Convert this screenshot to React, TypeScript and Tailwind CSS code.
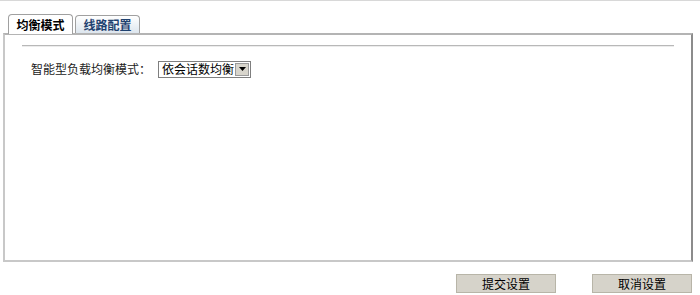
import React from "react";

const font = { fontFamily: '"Noto Sans CJK SC", "Liberation Sans", sans-serif' };

const Tab: React.FC<{ label: string; active?: boolean }> = ({ label, active }) => (
  <div
    className={
      active
        ? "relative -mb-px h-[20px] w-[65px] rounded-t-[4px] border border-b-0 border-[#a0a0a0] bg-white flex items-center justify-center text-[12px] font-bold text-black z-10"
        : "h-[18px] w-[65px] rounded-t-[4px] border border-b-0 border-[#a0a0a0] bg-gradient-to-b from-[#ffffff] to-[#dde6ee] flex items-center justify-center text-[12px] font-bold text-[#1f4270]"
    }
  >
    {label}
  </div>
);

const Btn: React.FC<{ label: string }> = ({ label }) => (
  <button className="h-[19px] w-[100px] border border-[#b8b5a8] bg-[#d6d3ca] text-[12px] leading-none text-black">
    {label}
  </button>
);

export default function App() {
  return (
    <div className="w-[700px] h-[295px] bg-white border-t border-[#d8d8d8]" style={font}>
      <div className="pl-[8px] pt-[13px] flex items-end gap-[2px] pr-[8px]">
        <Tab label="均衡模式" active />
        <Tab label="线路配置" />
      </div>
      <div className="ml-[3px] w-[690px] h-[229px] border-t-2 border-l-2 border-r-2 border-b-2 border-t-[#b4b4b4] border-l-[#c8c8c8] border-r-[#8c8c8c] border-b-[#c8c8c8] pt-[10px] px-[17px]">
        <div className="h-[2px] border-t border-[#b8b8b8] bg-[#ececec] w-[652px]" />
        <div className="mt-[13px] ml-[9px] flex items-center gap-[7px]">
          <span className="text-[12px] text-[#222]">智能型负载均衡模式：</span>
          <div className="flex h-[17px] w-[93px] items-center border border-[#7f7f7f] bg-white">
            <span className="flex-1 pl-[3px] text-[12px] leading-none text-black">依会话数均衡</span>
            <span className="mr-[1px] flex h-[13px] w-[14px] items-center justify-center border border-[#9a9a9a] bg-[#d8d5cc]">
              <svg width="7" height="4" viewBox="0 0 7 4">
                <path d="M0 0h7L3.5 4z" fill="#000" />
              </svg>
            </span>
          </div>
        </div>
      </div>
      <div className="mt-[12px] flex justify-end gap-[36px] pr-[8px]">
        <Btn label="提交设置" />
        <Btn label="取消设置" />
      </div>
    </div>
  );
}
